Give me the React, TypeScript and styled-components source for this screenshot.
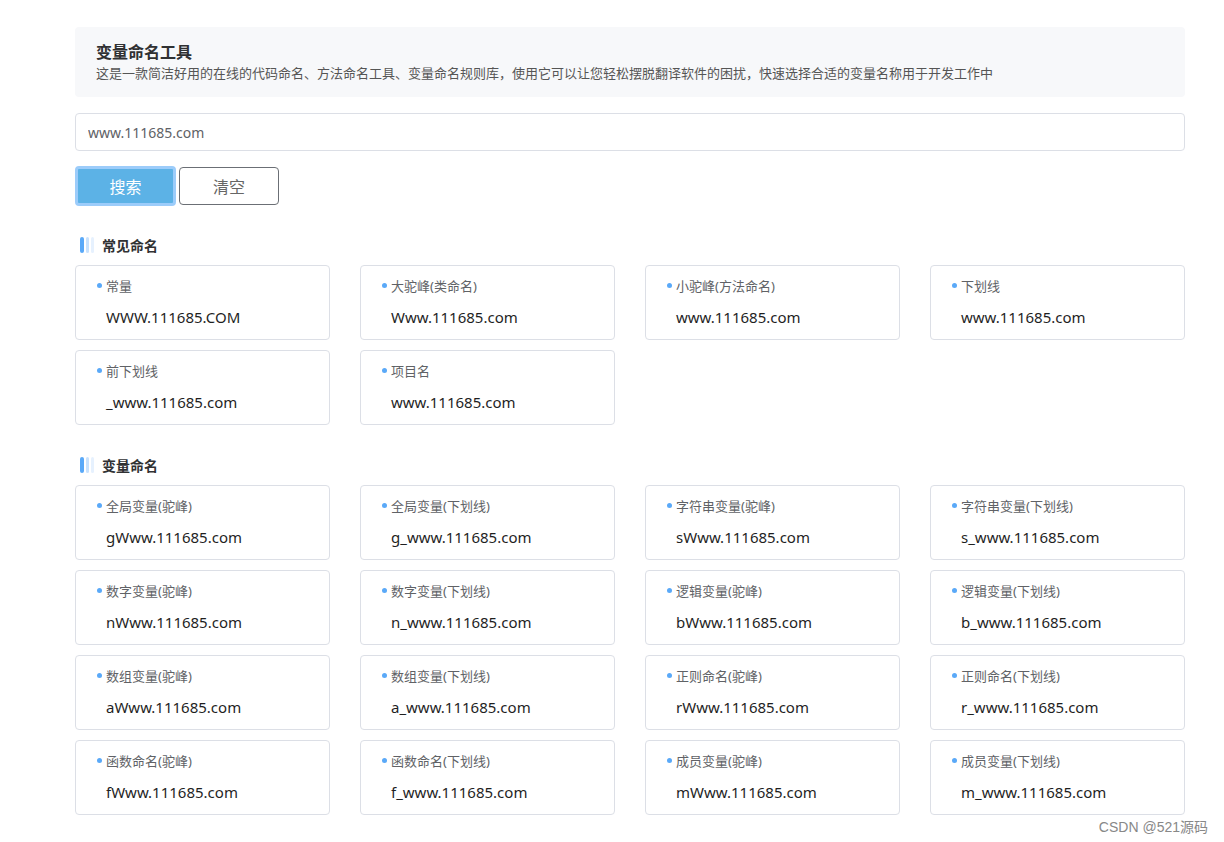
import React, { useState } from "react"
import styled, { createGlobalStyle } from "styled-components"

const GlobalStyle = createGlobalStyle`
  html, body {
    margin: 0;
    padding: 0;
    background: #fff;
    font-family: "Noto Sans", "Noto Sans CJK SC", sans-serif;
  }
`

const common = [
  { label: "常量", value: "WWW.111685.COM" },
  { label: "大驼峰(类命名)", value: "Www.111685.com" },
  { label: "小驼峰(方法命名)", value: "www.111685.com" },
  { label: "下划线", value: "www.111685.com" },
  { label: "前下划线", value: "_www.111685.com" },
  { label: "项目名", value: "www.111685.com" },
]

const variables = [
  { label: "全局变量(驼峰)", value: "gWww.111685.com" },
  { label: "全局变量(下划线)", value: "g_www.111685.com" },
  { label: "字符串变量(驼峰)", value: "sWww.111685.com" },
  { label: "字符串变量(下划线)", value: "s_www.111685.com" },
  { label: "数字变量(驼峰)", value: "nWww.111685.com" },
  { label: "数字变量(下划线)", value: "n_www.111685.com" },
  { label: "逻辑变量(驼峰)", value: "bWww.111685.com" },
  { label: "逻辑变量(下划线)", value: "b_www.111685.com" },
  { label: "数组变量(驼峰)", value: "aWww.111685.com" },
  { label: "数组变量(下划线)", value: "a_www.111685.com" },
  { label: "正则命名(驼峰)", value: "rWww.111685.com" },
  { label: "正则命名(下划线)", value: "r_www.111685.com" },
  { label: "函数命名(驼峰)", value: "fWww.111685.com" },
  { label: "函数命名(下划线)", value: "f_www.111685.com" },
  { label: "成员变量(驼峰)", value: "mWww.111685.com" },
  { label: "成员变量(下划线)", value: "m_www.111685.com" },
]

const SectionHead = ({ children }: { children: React.ReactNode }) => (
  <SectionTitle>
    <Bars>
      <Bar tone="#5aa9f8" />
      <Bar tone="#c9e2fd" />
      <Bar tone="#e6f1fe" />
    </Bars>
    {children}
  </SectionTitle>
)

const App = () => {
  const [query, setQuery] = useState("www.111685.com")

  return (
    <>
      <GlobalStyle />
      <Page>
        <Header>
          <Title>变量命名工具</Title>
          <Subtitle>
            这是一款简洁好用的在线的代码命名、方法命名工具、变量命名规则库，使用它可以让您轻松摆脱翻译软件的困扰，快速选择合适的变量名称用于开发工作中
          </Subtitle>
        </Header>

        <SearchInput value={query} onChange={(e) => setQuery(e.target.value)} />

        <ButtonRow>
          <Button primary>搜索</Button>
          <Button onClick={() => setQuery("")}>清空</Button>
        </ButtonRow>

        <Section>
          <SectionHead>常见命名</SectionHead>
          <Grid>
            {common.map((item) => (
              <Card key={item.label}>
                <Label>{item.label}</Label>
                <Value>{item.value}</Value>
              </Card>
            ))}
          </Grid>
        </Section>

        <Section>
          <SectionHead>变量命名</SectionHead>
          <Grid>
            {variables.map((item) => (
              <Card key={item.label}>
                <Label>{item.label}</Label>
                <Value>{item.value}</Value>
              </Card>
            ))}
          </Grid>
        </Section>

        <Watermark>CSDN @521源码</Watermark>
      </Page>
    </>
  )
}

export default App

const Page = styled.div`
  position: relative;
  width: 1110px;
  padding: 27px 0 0 75px;
  height: 815px;
`

const Header = styled.div`
  background: #f7f8fa;
  border-radius: 4px;
  height: 70px;
  box-sizing: border-box;
  padding: 14px 21px 0;
`

const Title = styled.div`
  font-size: 16px;
  font-weight: bold;
  color: #303133;
  line-height: 22px;
`

const Subtitle = styled.div`
  font-size: 13px;
  color: #555;
  line-height: 20px;
`

const SearchInput = styled.input`
  display: block;
  margin-top: 16px;
  width: 100%;
  height: 38px;
  box-sizing: border-box;
  border: 1px solid #dcdfe6;
  border-radius: 4px;
  padding: 0 12px;
  font-family: inherit;
  font-size: 14px;
  color: #606266;
  outline: none;
`

const ButtonRow = styled.div`
  display: flex;
  gap: 3px;
  margin-top: 15px;
`

const Button = styled.button<{ primary?: boolean }>`
  width: ${(p) => (p.primary ? "101px" : "100px")};
  height: ${(p) => (p.primary ? "40px" : "38px")};
  margin-top: ${(p) => (p.primary ? "0" : "1px")};
  box-sizing: border-box;
  border-radius: 4px;
  font-family: inherit;
  font-size: 16px;
  cursor: pointer;
  background: ${(p) => (p.primary ? "#5cb2e6" : "#fff")};
  color: ${(p) => (p.primary ? "#fff" : "#666")};
  border: ${(p) => (p.primary ? "3px solid #9cccfa" : "1px solid #6b6f75")};
`

const Section = styled.div`
  margin-top: 29px;
  & + & {
    margin-top: 30px;
  }
`

const SectionTitle = styled.div`
  display: flex;
  align-items: center;
  gap: 8px;
  font-size: 14px;
  font-weight: bold;
  color: #303133;
  height: 20px;
  padding-left: 5px;
`

const Bars = styled.div`
  display: flex;
  gap: 2px;
  height: 16px;
`

const Bar = styled.span<{ tone: string }>`
  width: 3px;
  height: 16px;
  border-radius: 2px;
  background: ${(p) => p.tone};
  &:first-child {
    width: 4px;
  }
`

const Grid = styled.div`
  display: grid;
  grid-template-columns: repeat(4, 255px);
  column-gap: 30px;
  row-gap: 10px;
  margin-top: 10px;
`

const Card = styled.div`
  height: 75px;
  box-sizing: border-box;
  border: 1px solid #dcdfe6;
  border-radius: 4px;
  padding: 10px 0 0 30px;
`

const Label = styled.div`
  position: relative;
  font-size: 13px;
  color: #606266;
  line-height: 20px;
  &::before {
    content: "";
    position: absolute;
    left: -9px;
    top: 7px;
    width: 5px;
    height: 5px;
    border-radius: 50%;
    background: #5aa9f8;
  }
`

const Value = styled.div`
  font-size: 15px;
  color: #1f1f1f;
  line-height: 22px;
  margin-top: 10px;
`

const Watermark = styled.div`
  position: absolute;
  right: -23px;
  bottom: 6px;
  font-family: "Liberation Sans", "Noto Sans CJK SC", sans-serif;
  font-size: 14px;
  color: #888;
`
